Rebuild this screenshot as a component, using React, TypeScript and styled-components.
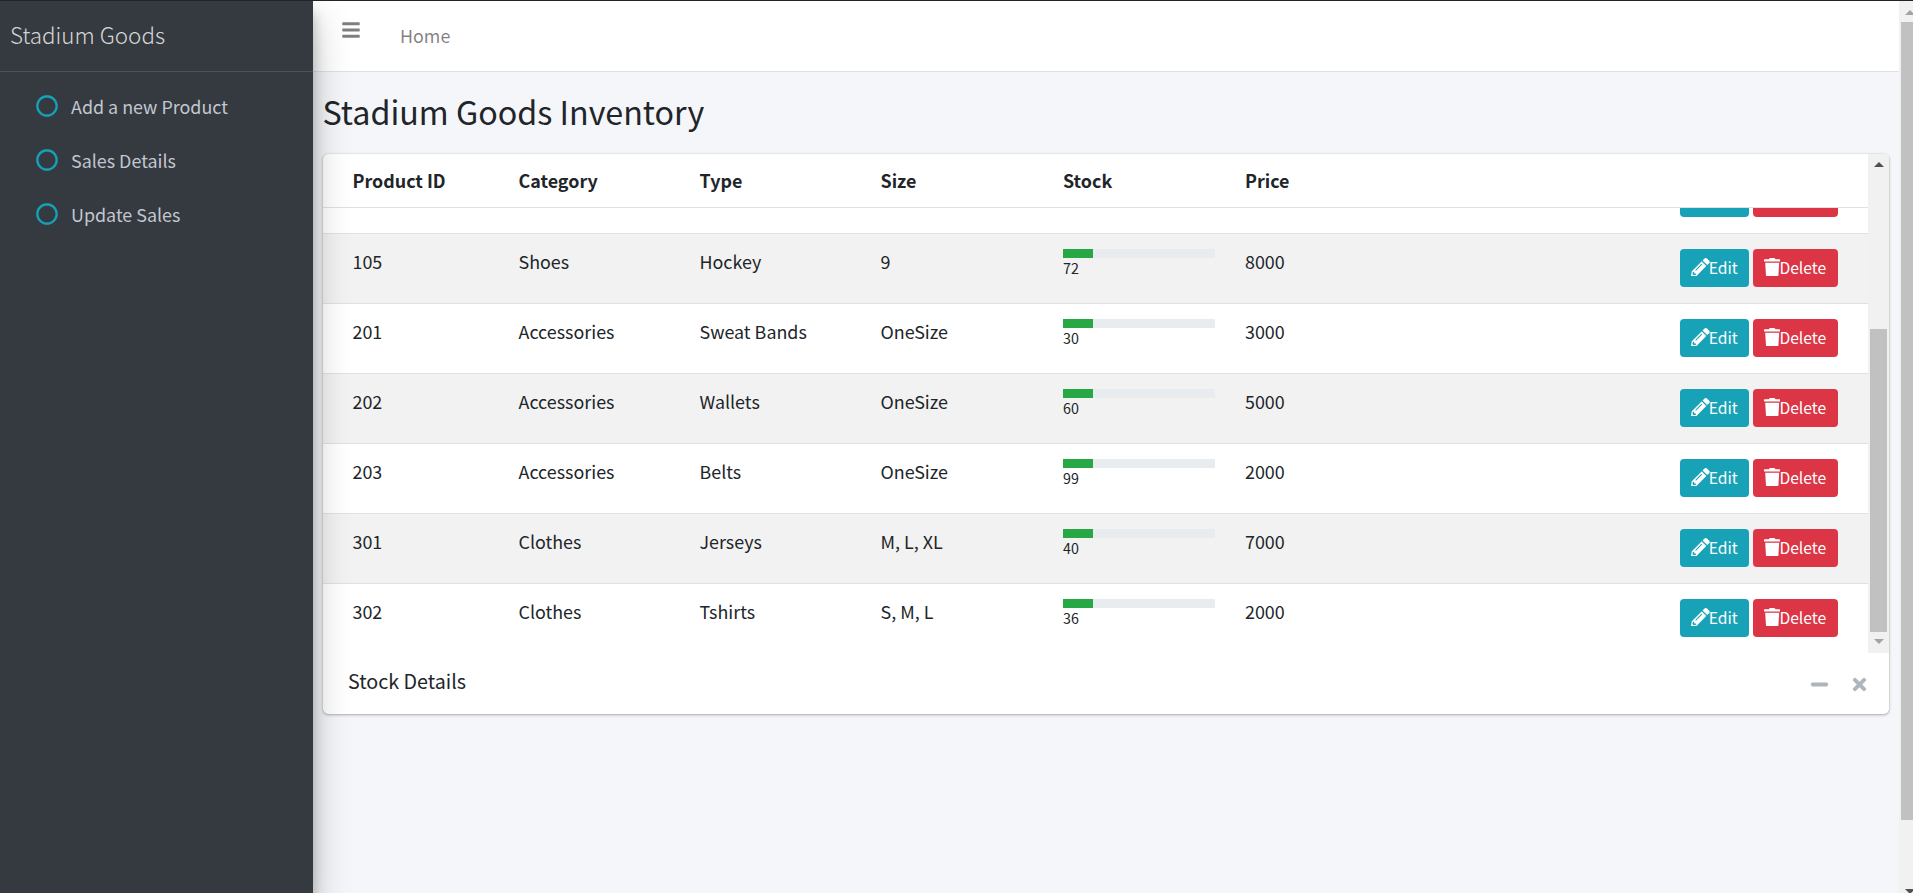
import React from "react";
import styled, { createGlobalStyle } from "styled-components";
import { FaBars, FaMinus, FaPencilAlt, FaRegCircle, FaTimes, FaTrash } from "react-icons/fa";

const GlobalStyle = createGlobalStyle`
  *, *::before, *::after { box-sizing: border-box; }
  html, body { margin: 0; height: 893px; overflow: hidden; }
  body {
    font-family: "Noto Sans CJK JP", "Noto Sans CJK SC", "Open Sans", sans-serif;
    font-size: 17.9px;
    font-weight: 400;
    line-height: 30px;
    color: #212529;
    background: #f4f6f9;
    font-kerning: normal;
  }
`;

const Page = styled.div`
  display: flex;
  height: 893px;
  border-top: 1px solid #232428;
  overflow: hidden;
`;

const Sidebar = styled.aside`
  position: relative;
  z-index: 2;
  flex: 0 0 313px;
  background: #343a40;
  color: #c2c7d0;
  box-shadow: 0 17px 35px rgba(0, 0, 0, 0.25), 0 12px 12px rgba(0, 0, 0, 0.22);
`;

const Brand = styled.div`
  height: 71px;
  padding: 14px 10px 0;
  border-bottom: 1px solid #4b545c;
  font-size: 22.4px;
  font-weight: 300;
  line-height: 38px;
  color: rgba(255, 255, 255, 0.8);
`;

const Menu = styled.nav`
  display: flex;
  flex-direction: column;
  gap: 4px;
  padding: 9px 10px 0;
`;

const MenuItem = styled.a`
  display: flex;
  align-items: center;
  height: 50px;
  padding-left: 26px;

  svg {
    margin: -1px 13px 0 0;
    color: #17a2b8;
    overflow: visible;
    stroke-width: 8px;
  }
`;

const Main = styled.div`
  flex: 1;
  min-width: 0;
`;

const Topbar = styled.header`
  display: flex;
  height: 71px;
  background: #fff;
  border-bottom: 1px solid #dee2e6;
  color: rgba(0, 0, 0, 0.5);
`;

const Toggle = styled.span`
  display: flex;
  padding: 19.4px 0 0 28.4px;
`;

const TopLink = styled.a`
  margin: 19px 0 0 38.6px;
`;

const Content = styled.main`
  padding: 0 10px;
`;

const Title = styled.h1`
  margin: 0 0 0 -0.5px;
  padding: 18px 0 21px;
  font-size: 32.25px;
  font-weight: 400;
  line-height: 43px;
`;

const Card = styled.section`
  background: #fff;
  border-radius: 5px;
  box-shadow: 0 0 1px rgba(0, 0, 0, 0.25), 0 1px 3px rgba(0, 0, 0, 0.3);
`;

const ScrollArea = styled.div`
  display: flex;
  height: 499px;
`;

const Table = styled.div`
  flex: 1;
  display: flex;
  flex-direction: column;
`;

const columns = `
  display: grid;
  grid-template-columns: 180.5px 181px 181px 182.5px 182px 1fr 188px;
`;

const HeadRow = styled.div`
  ${columns}
  flex: 0 0 54px;
  border-bottom: 1px solid #dee2e6;
  font-weight: 700;
`;

const HeadCell = styled.div`
  padding: 11px 15px 0;
  &:first-child { padding-left: 29.5px; }
`;

const Rows = styled.div`
  flex: 1;
  display: flex;
  flex-direction: column;
`;

const Row = styled.div<{ $striped: boolean }>`
  ${columns}
  flex: 0 0 70px;
  border-top: 1px solid #dee2e6;
  background: ${(p) => (p.$striped ? "#f2f2f2" : "#fff")};
`;

const Cell = styled.div`
  padding: 12px 15px 0;
  &:first-child { padding-left: 29.5px; }
`;

const StockCell = styled.div`
  padding: 15px 15px 0;
`;

const Track = styled.div`
  height: 9px;
  background: #e9ecef;
`;

const Fill = styled.div`
  width: 30px;
  height: 100%;
  background: #28a745;
`;

const StockCount = styled.small`
  display: block;
  font-size: 14.3px;
  line-height: 20px;
`;

const Actions = styled.div`
  display: flex;
  gap: 4px;
  padding-top: 15px;
`;

const ActionButton = styled.button<{ $color: string; $width: number }>`
  display: flex;
  align-items: center;
  width: ${(p) => p.$width}px;
  height: 38px;
  padding: 0 0 0 11px;
  border: 0;
  border-radius: 4px;
  background: ${(p) => p.$color};
  color: #fff;
  font: inherit;
  font-size: 15.7px;
  white-space: nowrap;

  svg { flex: none; margin: -2px -1px 0 0; }
`;

const TrashIcon = styled(FaTrash)`
  width: 16.4px;
  height: 18.7px;
`;

const ScrolledRow = styled.div`
  display: flex;
  flex: 0 0 26px;
  gap: 4px;
  padding: 0 30px 0 0;
  justify-content: flex-end;
  margin-bottom: -1px;
`;

const ButtonEdge = styled.div<{ $color: string; $width: number }>`
  width: ${(p) => p.$width}px;
  height: 9px;
  border-radius: 0 0 4px 4px;
  background: ${(p) => p.$color};
`;

const Scrollbar = styled.div<{ $outer?: boolean }>`
  display: flex;
  flex-direction: column;
  flex: 0 0 ${(p) => (p.$outer ? 14 : 21)}px;
  overflow: hidden;
  background: #f1f1f1;
  padding-left: 2px;
  border-top-right-radius: ${(p) => (p.$outer ? 0 : 4)}px;
`;

const ArrowButton = styled.div<{ $h: number; $top: number }>`
  flex: 0 0 ${(p) => p.$h}px;
  padding: ${(p) => p.$top}px 0 0 4px;
  svg { display: block; }
`;

const Thumb = styled.div<{ $top: number; $height: number }>`
  flex: none;
  width: 17px;
  height: ${(p) => p.$height}px;
  margin-top: ${(p) => p.$top}px;
  background: #c1c1c1;
`;

const CardFooter = styled.footer`
  display: flex;
  align-items: flex-start;
  justify-content: space-between;
  height: 61px;
  padding: 14px 20px 0 25px;
`;

const FooterTitle = styled.h3`
  margin: 0;
  font-size: 19.7px;
  font-weight: 400;
  line-height: 28px;
`;

const Tools = styled.div`
  display: flex;
  align-items: center;
  gap: 21px;
  padding-top: 8px;
  color: #adb5bd;

  svg { stroke-width: 12px; }
`;

type Product = {
  id: string;
  category: string;
  type: string;
  size: string;
  stock: string;
  price: string;
};

const products: Product[] = [
  { id: "105", category: "Shoes", type: "Hockey", size: "9", stock: "72", price: "8000" },
  { id: "201", category: "Accessories", type: "Sweat Bands", size: "OneSize", stock: "30", price: "3000" },
  { id: "202", category: "Accessories", type: "Wallets", size: "OneSize", stock: "60", price: "5000" },
  { id: "203", category: "Accessories", type: "Belts", size: "OneSize", stock: "99", price: "2000" },
  { id: "301", category: "Clothes", type: "Jerseys", size: "M, L, XL", stock: "40", price: "7000" },
  { id: "302", category: "Clothes", type: "Tshirts", size: "S, M, L", stock: "36", price: "2000" },
];

const Arrow = ({ down, color }: { down?: boolean; color: string }) => (
  <svg width="10" height="5" viewBox="0 0 10 5">
    <path d={down ? "M0 0h10L5 5z" : "M0 5h10L5 0z"} fill={color} />
  </svg>
);

const RowActions = () => (
  <Actions>
    <ActionButton $color="#17a2b8" $width={69}>
      <FaPencilAlt size={18.7} />
      Edit
    </ActionButton>
    <ActionButton $color="#dc3545" $width={85}>
      <TrashIcon />
      Delete
    </ActionButton>
  </Actions>
);

export default function App() {
  return (
    <>
      <GlobalStyle />
      <Page>
        <Sidebar>
          <Brand>Stadium Goods</Brand>
          <Menu>
            {["Add a new Product", "Sales Details", "Update Sales"].map((label) => (
              <MenuItem key={label}>
                <FaRegCircle size={22} />
                {label}
              </MenuItem>
            ))}
          </Menu>
        </Sidebar>
        <Main>
          <Topbar>
            <Toggle>
              <FaBars size={20} />
            </Toggle>
            <TopLink>Home</TopLink>
          </Topbar>
          <Content>
            <Title>Stadium Goods Inventory</Title>
            <Card>
              <ScrollArea>
                <Table>
                  <HeadRow>
                    {["Product ID", "Category", "Type", "Size", "Stock", "Price"].map((h) => (
                      <HeadCell key={h}>{h}</HeadCell>
                    ))}
                  </HeadRow>
                  <Rows>
                    <ScrolledRow>
                      <ButtonEdge $color="#17a2b8" $width={69} />
                      <ButtonEdge $color="#dc3545" $width={85} />
                    </ScrolledRow>
                    {products.map((p, i) => (
                      <Row key={p.id} $striped={i % 2 === 0}>
                        <Cell>{p.id}</Cell>
                        <Cell>{p.category}</Cell>
                        <Cell>{p.type}</Cell>
                        <Cell>{p.size}</Cell>
                        <StockCell>
                          <Track>
                            <Fill />
                          </Track>
                          <StockCount>{p.stock}</StockCount>
                        </StockCell>
                        <Cell>{p.price}</Cell>
                        <RowActions />
                      </Row>
                    ))}
                  </Rows>
                </Table>
                <Scrollbar>
                  <ArrowButton $h={21} $top={8}>
                    <Arrow color="#505050" />
                  </ArrowButton>
                  <Thumb $top={154} $height={303} />
                  <ArrowButton $h={21} $top={7}>
                    <Arrow down color="#a3a3a3" />
                  </ArrowButton>
                </Scrollbar>
              </ScrollArea>
              <CardFooter>
                <FooterTitle>Stock Details</FooterTitle>
                <Tools>
                  <FaMinus size={19} />
                  <FaTimes size={19} />
                </Tools>
              </CardFooter>
            </Card>
          </Content>
        </Main>
        <Scrollbar $outer>
          <ArrowButton $h={21} $top={9}>
            <Arrow color="#a3a3a3" />
          </ArrowButton>
          <Thumb $top={0} $height={798} />
          <ArrowButton $h={73} $top={69}>
            <Arrow down color="#505050" />
          </ArrowButton>
        </Scrollbar>
      </Page>
    </>
  );
}
